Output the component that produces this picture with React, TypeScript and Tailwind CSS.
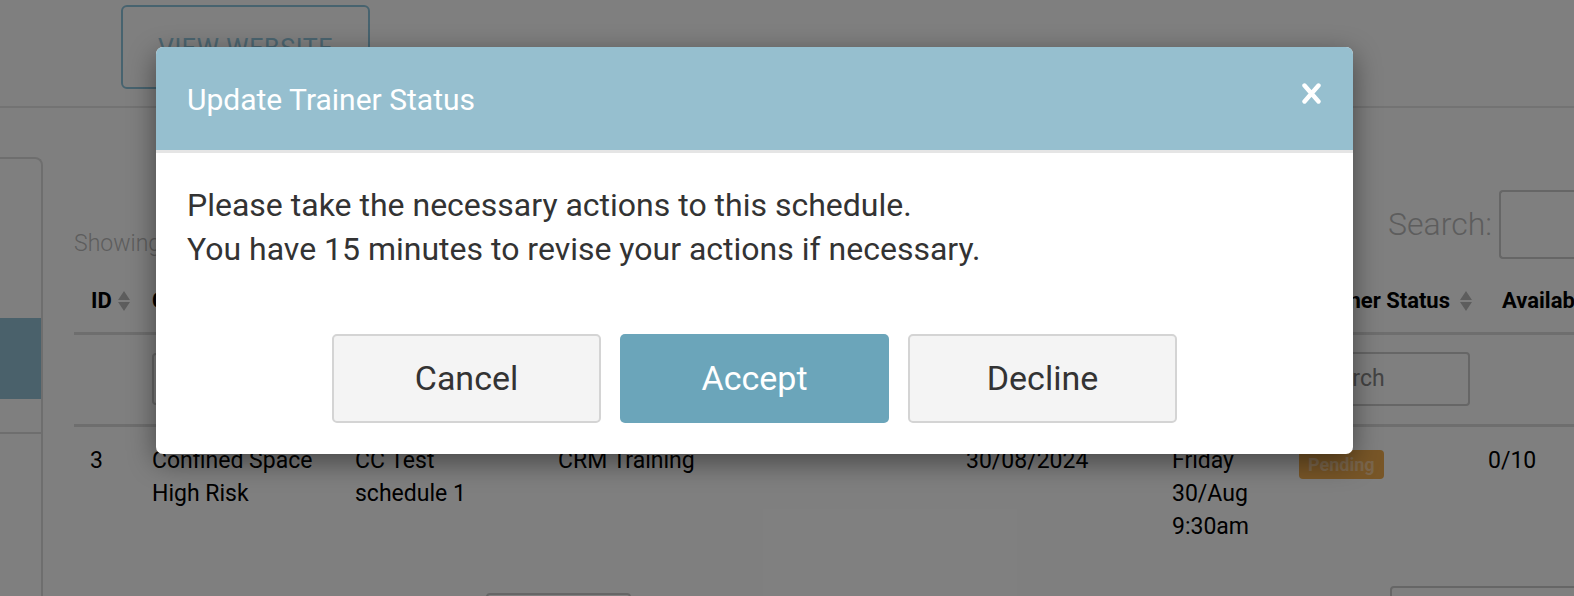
import { useState } from 'react';

function SortArrows() {
  return (
    <span className="ml-[6px] inline-flex flex-col justify-center leading-none text-[#bbbbbb]">
      <svg width="12" height="9" viewBox="0 0 12 9"><path d="M6 0 L12 9 L0 9 Z" fill="currentColor" /></svg>
      <svg width="12" height="9" viewBox="0 0 12 9" className="mt-[2px]"><path d="M0 0 L12 0 L6 9 Z" fill="currentColor" /></svg>
    </span>
  );
}

function BackgroundPage() {
  return (
    <div className="h-[596px] w-full overflow-hidden bg-white text-black" style={{ fontFamily: 'Roboto, "Liberation Sans", sans-serif' }}>
      {/* Top header */}
      <div className="h-[108px] border-b-2 border-[#e6e6e6] pl-[121px] pt-[5px]">
        <button className="h-[84px] w-[249px] rounded-[6px] border-2 border-[#8fc6de] pt-[4px] text-[25px] tracking-wide text-[#96cae0]">
          VIEW WEBSITE
        </button>
      </div>

      <div className="flex pt-[49px]">
        {/* Sidebar card */}
        <div className="h-[460px] w-[43px] shrink-0 rounded-tr-[8px] border-r-2 border-t-2 border-[#dddddd]">
          <div className="mt-[159px] h-[81px] bg-[#94c2d6]" />
          <div className="mt-[33px] border-b-2 border-[#dddddd]" />
        </div>

        {/* Content */}
        <div className="ml-[31px] min-w-0 flex-1">
          <div className="flex items-center justify-between pt-[30px]">
            <span className="mt-[40px] text-[23px] font-light text-[#bbbbbb]">Showing 1 to 1 of 1 entries</span>
            <div className="mr-[-13px] flex items-center gap-[7px]">
              <span className="text-[32px] font-light text-[#bbbbbb]">Search:</span>
              <div className="h-[69px] w-[88px] rounded-l-[4px] border-y-2 border-l-2 border-[#cccccc]" />
            </div>
          </div>

          {/* Table header */}
          <div className="mt-[8px] flex h-[65px] items-center border-b-[3px] border-[#dddddd] text-[22px] font-bold">
            <div className="flex w-[78px] shrink-0 items-center pl-[17px]">ID<SortArrows /></div>
            <div className="flex w-[203px] shrink-0 items-center">Course<SortArrows /></div>
            <div className="flex w-[203px] shrink-0 items-center">Schedule<SortArrows /></div>
            <div className="flex w-[408px] shrink-0 items-center">Category<SortArrows /></div>
            <div className="flex w-[206px] shrink-0 items-center">Date<SortArrows /></div>
            <div className="flex w-[127px] shrink-0 items-center">Time<SortArrows /></div>
            <div className="flex w-[203px] shrink-0 items-center justify-end gap-[4px] pr-[30px]">Trainer Status<SortArrows /></div>
            <div className="flex items-center whitespace-nowrap">Available</div>
          </div>

          {/* Filter row */}
          <div className="flex h-[92px] items-center border-b-[3px] border-[#dddddd]">
            <div className="ml-[78px] h-[52px] w-[180px] rounded-[4px] border-2 border-[#cccccc]" />
            <div className="flex-1" />
            <div className="mr-[38px] flex h-[54px] w-[170px] items-center rounded-[4px] border-2 border-[#cccccc] pl-[12px] text-[23px] text-[#888888]">Search</div>
            <div className="w-[66px]" />
          </div>

          {/* Data row */}
          <div className="flex pt-[17px] text-[23px] leading-[33px]">
            <div className="w-[78px] shrink-0 pl-[16px]">3</div>
            <div className="w-[203px] shrink-0">Confined Space<br />High Risk</div>
            <div className="w-[203px] shrink-0">CC Test<br />schedule 1</div>
            <div className="w-[408px] shrink-0">CRM Training</div>
            <div className="w-[206px] shrink-0">30/08/2024</div>
            <div className="w-[127px] shrink-0">Friday<br />30/Aug<br />9:30am</div>
            <div className="w-[189px] shrink-0 pt-[3px]">
              <span className="inline-block rounded-[4px] bg-[#f0ad4e] px-[9px] text-[18px] leading-[29px] font-bold text-[#f6cc98]">Pending</span>
            </div>
            <div>0/10</div>
          </div>

          <div className="mt-[43px] flex">
            <div className="ml-[412px] mt-[7px] h-[20px] w-[145px] shrink-0 rounded-[4px] border-2 border-[#cccccc]" />
            <div className="ml-[759px] h-[30px] w-[200px] shrink-0 rounded-[4px] border-2 border-[#cccccc]" />
          </div>
        </div>
      </div>
    </div>
  );
}

export default function App() {
  const [open, setOpen] = useState(true);

  return (
    <div className="relative h-[596px] w-full overflow-hidden">
      <BackgroundPage />

      {open && (
        <div className="absolute inset-0 bg-black/50" style={{ fontFamily: 'Roboto, "Liberation Sans", sans-serif' }}>
          <div className="ml-[156px] mt-[47px] w-[1197px] overflow-hidden rounded-[7px] bg-white shadow-[0_8px_28px_rgba(0,0,0,0.45)]">
            <div className="flex h-[106px] items-center justify-between border-b-[3px] border-[#e5e5e5] bg-[#96bfcf] pl-[31px] pr-[32px]">
              <h4 className="pt-[2px] text-[30px] text-white">Update Trainer Status</h4>
              <button onClick={() => setOpen(false)} className="mt-[-10px] text-white">
                <svg width="19" height="21" viewBox="0 0 19 21">
                  <path d="M2.5 2.5 L16.5 18.5 M16.5 2.5 L2.5 18.5" stroke="currentColor" strokeWidth="4.4" strokeLinecap="round" />
                </svg>
              </button>
            </div>
            <div className="px-[31px] pt-[30px] text-[32px] leading-[44px] text-[#333333]">
              <p>Please take the necessary actions to this schedule.</p>
              <p>You have 15 minutes to revise your actions if necessary.</p>
            </div>
            <div className="flex justify-center gap-[19px] pb-[31px] pt-[63px] text-[34px]">
              <button onClick={() => setOpen(false)} className="h-[89px] w-[269px] rounded-[5px] border-2 border-[#d4d4d4] bg-[#f4f4f4] text-[#333333]">Cancel</button>
              <button className="h-[89px] w-[269px] rounded-[5px] bg-[#6ba5ba] text-white">Accept</button>
              <button className="h-[89px] w-[269px] rounded-[5px] border-2 border-[#d4d4d4] bg-[#f4f4f4] text-[#333333]">Decline</button>
            </div>
          </div>
        </div>
      )}
    </div>
  );
}
